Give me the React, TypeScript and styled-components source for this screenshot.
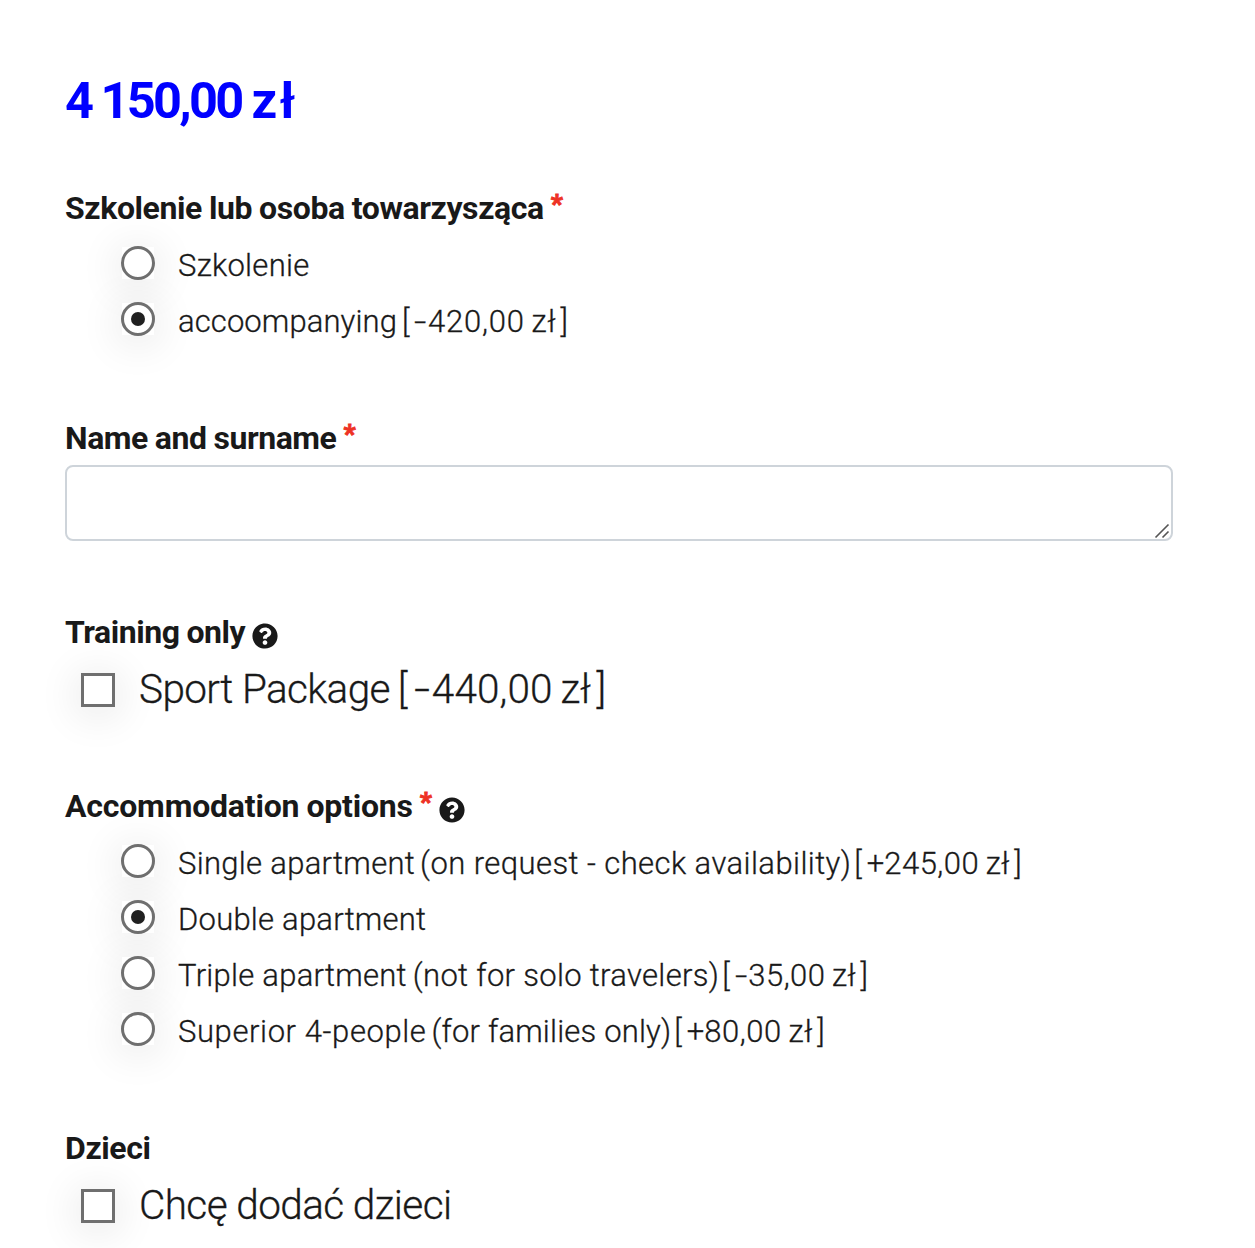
import React, { useState } from "react";
import styled, { createGlobalStyle } from "styled-components";
import { FaQuestionCircle } from "react-icons/fa";

const GlobalStyle = createGlobalStyle`
  *, *::before, *::after { box-sizing: border-box; }
  body { margin: 0; background: #fff; overflow: hidden; }
`;

const Form = styled.form`
  display: flex;
  flex-direction: column;
  width: 1255px;
  height: 1248px;
  padding: 71px 82px 0 65px;
  overflow: hidden;
  color: #191919;
  font-family: Roboto, "Open Sans", sans-serif;
`;

const Total = styled.div`
  height: 60px;
  margin-bottom: 59px;
  color: #00f;
  font-size: 50.5px;
  font-weight: 700;
  line-height: 60px;
  white-space: nowrap;
`;

const Phrase = styled.span<{ $track?: number; $left?: number }>`
  margin-left: ${(p) => p.$left ?? 0}px;
  letter-spacing: ${(p) => p.$track ?? 0}px;
  white-space: pre;
`;

const Section = styled.section<{ $after?: number }>`
  display: flex;
  flex-direction: column;
  flex-shrink: 0;
  margin-bottom: ${(p) => p.$after ?? 0}px;
`;

const Heading = styled.div`
  display: flex;
  height: 38px;
  font-size: 32px;
  font-weight: 700;
  line-height: 37px;
  white-space: nowrap;
`;

const HeadingText = styled.span<{ $track: number }>`
  letter-spacing: ${(p) => p.$track}px;
  word-spacing: -0.6px;
`;

const Required = styled.span`
  width: 12px;
  margin: -4px 0 0 7px;
  color: #ee3224;
  font-size: 26px;
  font-weight: 900;
  -webkit-text-stroke: 0.9px #ee3224;
`;

const Help = styled(FaQuestionCircle)`
  width: 26px;
  height: 26px;
  margin: 9px 0 0 7px;
`;

const RadioList = styled.div`
  display: flex;
  flex-direction: column;
  padding: 10px 0 0 57px;
`;

const RadioRow = styled.label`
  display: flex;
  align-items: flex-start;
  height: 56px;
  font-size: 31px;
  font-weight: 300;
  line-height: 56px;
  white-space: nowrap;
  -webkit-text-stroke: 0.3px #191919;
`;

const RadioInput = styled.input`
  appearance: none;
  position: relative;
  flex: none;
  width: 32px;
  height: 32px;
  margin: 9px 24px 0 0;
  background: #fff;
  box-shadow: 0 5px 44px rgba(0, 0, 0, 0.14);

  &::before {
    content: "";
    position: absolute;
    inset: -1px;
    border: 3px solid #6f6f6f;
    border-radius: 50%;
    background: #fff;
  }

  &:checked::after {
    content: "";
    position: absolute;
    inset: 9px;
    border-radius: 50%;
    background: #202020;
  }
`;

const CheckRow = styled.label`
  display: flex;
  align-items: center;
  height: 76px;
  padding-left: 16px;
  font-size: 40.5px;
  font-weight: 300;
  line-height: 74px;
  white-space: nowrap;
  -webkit-text-stroke: 0.3px #191919;
`;

const CheckInput = styled.input`
  appearance: none;
  flex: none;
  width: 34px;
  height: 34px;
  margin: 0 24px 0 0;
  border: 3px solid #6f6f6f;
  background: #fff;
  box-shadow: 0 5px 44px rgba(0, 0, 0, 0.14);

  &:checked {
    background: #202020;
    box-shadow: inset 0 0 0 5px #fff;
  }
`;

const CheckText = styled.span`
  height: 76px;
`;

const Field = styled.div`
  position: relative;
  height: 76px;
  margin-top: 7px;
`;

const TextArea = styled.textarea`
  display: block;
  width: 100%;
  height: 76px;
  padding: 12px 20px;
  border: 2px solid #ced4da;
  border-radius: 8px;
  outline: none;
  background: #fff;
  font: 300 31px Roboto, sans-serif;
  resize: none;
`;

const Grip = styled.svg`
  position: absolute;
  right: 3px;
  bottom: 2px;
  width: 16px;
  height: 16px;
  pointer-events: none;
`;

const PriceBox = styled.span<{ $left: number; $track: number }>`
  margin-left: ${(p) => p.$left}px;
  letter-spacing: ${(p) => p.$track}px;
`;

const Open = styled.span`
  display: inline-block;
  width: 0.4em;
  letter-spacing: 0;
`;

const Sign = styled.span<{ $wide: boolean }>`
  display: inline-block;
  min-width: 0.44em;
  letter-spacing: 0;
  transform: ${(p) => (p.$wide ? "scaleX(1.4)" : "none")};
  transform-origin: left;
`;

const Currency = styled.span`
  margin: 0 0.14em 0 -0.05em;
`;

type PriceProps = { sign: string; amount: string; left: number; track?: number };

function Price({ sign, amount, left, track = 0.6 }: PriceProps) {
  return (
    <PriceBox $left={left} $track={track}>
      <Open>[</Open>
      <Sign $wide={sign === "-"}>{sign}</Sign>
      {amount} <Currency>zł</Currency>]
    </PriceBox>
  );
}

type Part = { text: string; track: number; left?: number };
type Option = { parts: Part[]; price?: PriceProps };

const participants: Option[] = [
  { parts: [{ text: "Szkolenie", track: 0.27 }] },
  { parts: [{ text: "accoompanying", track: 0.1 }], price: { sign: "-", amount: "420,00", left: 5, track: 0.8 } },
];

const rooms: Option[] = [
  {
    parts: [
      { text: "Single apartment", track: 0.3 },
      { text: "(on request - check availability)", track: 0.43, left: 5 },
    ],
    price: { sign: "+", amount: "245,00", left: 3, track: 0.5 },
  },
  { parts: [{ text: "Double apartment", track: 0.23 }] },
  {
    parts: [
      { text: "Triple apartment", track: 0.26 },
      { text: "(not for solo travelers)", track: 0.32, left: 6 },
    ],
    price: { sign: "-", amount: "35,00", left: 3, track: 0.5 },
  },
  {
    parts: [
      { text: "Superior 4-people", track: 0.6 },
      { text: "(for families only)", track: 0.18, left: 5 },
    ],
    price: { sign: "+", amount: "80,00", left: 3 },
  },
];

function Radios({ name, options, initial }: { name: string; options: Option[]; initial: number }) {
  const [selected, setSelected] = useState(initial);
  return (
    <RadioList>
      {options.map((option, i) => (
        <RadioRow key={i}>
          <RadioInput type="radio" name={name} checked={selected === i} onChange={() => setSelected(i)} />
          {option.parts.map((part) => (
            <Phrase key={part.text} $track={part.track} $left={part.left}>
              {part.text}
            </Phrase>
          ))}
          {option.price && <Price {...option.price} />}
        </RadioRow>
      ))}
    </RadioList>
  );
}

export default function App() {
  return (
    <>
      <GlobalStyle />
      <Form>
        <Total>
          <Phrase>4</Phrase>
          <Phrase $track={-2.7} $left={6.5}>150,00</Phrase>
          <Phrase $track={2.4} $left={10}>zł</Phrase>
        </Total>

        <Section $after={70}>
          <Heading>
            <HeadingText $track={-0.4}>Szkolenie lub osoba towarzysząca</HeadingText>
            <Required>*</Required>
          </Heading>
          <Radios name="participant" options={participants} initial={1} />
        </Section>

        <Section $after={73}>
          <Heading>
            <HeadingText $track={-0.45}>Name and surname</HeadingText>
            <Required>*</Required>
          </Heading>
          <Field>
            <TextArea aria-label="Name and surname" />
            <Grip viewBox="0 0 16 16" fill="none" stroke="#555" strokeWidth="1.6">
              <path d="M1.5 14.5l13-13M8.5 14.5l6-6" />
            </Grip>
          </Field>
        </Section>

        <Section $after={60}>
          <Heading>
            <HeadingText $track={-0.45}>Training only</HeadingText>
            <Help />
          </Heading>
          <CheckRow>
            <CheckInput type="checkbox" />
            <CheckText>
              <Phrase $track={-0.63}>Sport Package</Phrase>
              <Price sign="-" amount="440,00" left={8} track={0.1} />
            </CheckText>
          </CheckRow>
        </Section>

        <Section $after={70}>
          <Heading>
            <HeadingText $track={-0.2}>Accommodation options</HeadingText>
            <Required>*</Required>
            <Help />
          </Heading>
          <Radios name="room" options={rooms} initial={1} />
        </Section>

        <Section>
          <Heading>
            <HeadingText $track={-0.4}>Dzieci</HeadingText>
          </Heading>
          <CheckRow>
            <CheckInput type="checkbox" />
            <CheckText>
              <Phrase $track={-0.6}>Chcę dodać dzieci</Phrase>
            </CheckText>
          </CheckRow>
        </Section>
      </Form>
    </>
  );
}
